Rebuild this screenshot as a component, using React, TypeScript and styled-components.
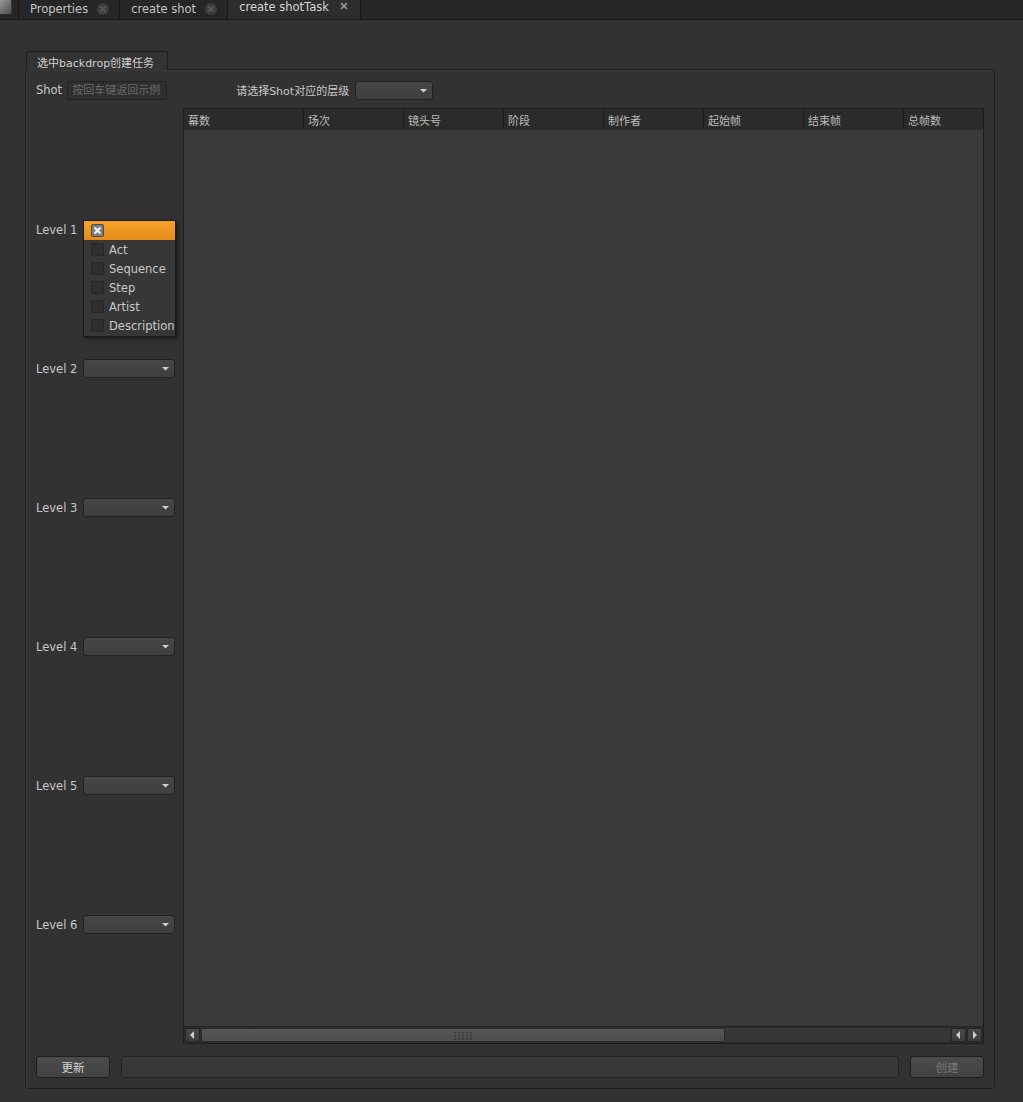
import React from 'react';
import styled, { createGlobalStyle } from 'styled-components';

const GlobalStyle = createGlobalStyle`
  html, body {
    margin: 0;
    padding: 0;
    background: #323232;
  }
  body {
    font-family: "DejaVu Sans", "Noto Sans CJK SC", sans-serif;
    font-size: 11px;
    color: #c8c8c8;
  }
  * {
    box-sizing: border-box;
  }
`;

const columns = ['幕数', '场次', '镜头号', '阶段', '制作者', '起始帧', '结束帧', '总帧数'];
const levelOptions = ['Act', 'Sequence', 'Step', 'Artist', 'Description'];

const CloseIcon = ({ active }: { active?: boolean }) => (
  <svg width="12" height="12" viewBox="0 0 12 12">
    {!active && <circle cx="6" cy="6" r="6" fill="#3e3e3e" />}
    <path
      d="M3.6 3.6 L8.4 8.4 M8.4 3.6 L3.6 8.4"
      stroke={active ? '#8c8c8c' : '#555'}
      strokeWidth="2"
      strokeLinecap="round"
    />
  </svg>
);

const CheckedBox = () => (
  <svg width="13" height="13" viewBox="0 0 13 13">
    <rect x="0.5" y="0.5" width="12" height="12" rx="1" fill="#7c7c7c" stroke="#4a4a4a" />
    <path d="M3.5 3.5 L9.5 9.5 M9.5 3.5 L3.5 9.5" stroke="#f2f2f2" strokeWidth="2.4" />
  </svg>
);

const Grip = () => (
  <svg width="20" height="9" viewBox="0 0 20 9">
    {[0, 1, 2].map((r) =>
      [0, 1, 2, 3, 4].map((c) => (
        <rect key={`${r}-${c}`} x={c * 4 + 1} y={r * 3 + 1} width="2" height="1.5" fill="#3a3a3a" />
      ))
    )}
  </svg>
);

const Arrow = ({ dir }: { dir: 'left' | 'right' | 'down' }) => {
  if (dir === 'down') {
    return (
      <svg width="9" height="7" viewBox="0 0 9 7">
        <path d="M1 2 L8 2 L4.5 5.5 Z" fill="#d0d0d0" />
      </svg>
    );
  }
  const d = dir === 'left' ? 'M6 1 L6 9 L2 5 Z' : 'M3 1 L3 9 L7 5 Z';
  return (
    <svg width="9" height="10" viewBox="0 0 9 10">
      <path d={d} fill="#d0d0d0" />
    </svg>
  );
};

const ComboBox = ({ width }: { width?: number }) => (
  <Combo $width={width}>
    <Arrow dir="down" />
  </Combo>
);

const App = () => {
  return (
    <Window>
      <GlobalStyle />
      <TabBar>
        <PaneIcon />
        <Tab>
          <span>Properties</span>
          <CloseIcon />
        </Tab>
        <Tab>
          <span>create shot</span>
          <CloseIcon />
        </Tab>
        <Tab $active>
          <span>create shotTask</span>
          <CloseIcon active />
        </Tab>
      </TabBar>

      <Body>
        <GroupBox>
          <GroupTitle>选中backdrop创建任务</GroupTitle>
          <GroupFrame>
            <TopRow>
              <Label>Shot</Label>
              <LineEdit placeholder="按回车键返回示例" />
              <ChoiceLabel>请选择Shot对应的层级</ChoiceLabel>
              <ComboBox width={78} />
            </TopRow>

            <MainRow>
              <LevelColumn>
                {[1, 2, 3, 4, 5, 6].map((n) => (
                  <LevelRow key={n}>
                    <LevelLabel>Level {n}</LevelLabel>
                    <ComboBox />
                    {n === 1 && (
                      <Popup>
                        <PopupItem $selected>
                          <CheckedBox />
                        </PopupItem>
                        {levelOptions.map((opt) => (
                          <PopupItem key={opt}>
                            <CheckBox />
                            <span>{opt}</span>
                          </PopupItem>
                        ))}
                      </Popup>
                    )}
                  </LevelRow>
                ))}
              </LevelColumn>

              <Table>
                <HeaderRow>
                  {columns.map((c, i) => (
                    <HeaderCell key={c} $width={i === 0 ? 120 : 100}>
                      {c}
                    </HeaderCell>
                  ))}
                </HeaderRow>
                <TableBody />
                <HScroll>
                  <ScrollButton>
                    <Arrow dir="left" />
                  </ScrollButton>
                  <ScrollTrack>
                    <ScrollThumb>
                      <Grip />
                    </ScrollThumb>
                  </ScrollTrack>
                  <ScrollButton>
                    <Arrow dir="left" />
                  </ScrollButton>
                  <ScrollButton>
                    <Arrow dir="right" />
                  </ScrollButton>
                </HScroll>
              </Table>
            </MainRow>

            <BottomRow>
              <Button>更新</Button>
              <Progress />
              <Button $disabled>创建</Button>
            </BottomRow>
          </GroupFrame>
        </GroupBox>
      </Body>
    </Window>
  );
};

const Window = styled.div`
  width: 1023px;
  height: 1102px;
  display: flex;
  flex-direction: column;
  overflow: hidden;
  background: #323232;
`;

const TabBar = styled.div`
  height: 20px;
  display: flex;
  align-items: stretch;
  background: #262626;
  border-bottom: 1px solid #1b1b1b;
`;

const PaneIcon = styled.div`
  width: 12px;
  height: 14px;
  margin-right: 6px;
  background: linear-gradient(135deg, #9a9a9a 0%, #6a6a6a 60%, #505050 100%);
  border-right: 1px solid #3a3a3a;
`;

const Tab = styled.div<{ $active?: boolean }>`
  display: flex;
  align-items: center;
  gap: 9px;
  padding: 0 10px 1px 11px;
  height: 19px;
  color: ${(p) => (p.$active ? '#d6d6d6' : '#c4c4c4')};
  background: ${(p) => (p.$active ? '#2d2d2d' : '#262626')};
  border-left: 1px solid #161616;
  font-size: 11.5px;

  &:last-child {
    border-right: 1px solid #161616;
    align-items: flex-start;
    padding-top: 0;
  }
`;

const Body = styled.div`
  flex: 1;
  display: flex;
  flex-direction: column;
  padding: 31px 28px 13px 25px;
`;

const GroupBox = styled.div`
  flex: 1;
  display: flex;
  flex-direction: column;
`;

const GroupTitle = styled.div`
  align-self: flex-start;
  margin-left: 1px;
  height: 19px;
  width: 142px;
  padding: 2px 0 0 10px;
  border: 1px solid #1f1f1f;
  border-bottom: none;
  border-radius: 3px 3px 0 0;
  background: #333333;
  color: #d0d0d0;
  margin-bottom: -1px;
  position: relative;
  z-index: 1;
`;

const GroupFrame = styled.div`
  flex: 1;
  display: flex;
  flex-direction: column;
  padding: 10px;
  border: 1px solid #1f1f1f;
  border-radius: 3px;
  box-shadow: inset 1px 1px 0 #3a3a3a;
`;

const TopRow = styled.div`
  height: 20px;
  display: flex;
  align-items: center;
`;

const Label = styled.span`
  color: #c8c8c8;
  margin-right: 5px;
  white-space: nowrap;
  font-size: 11.5px;
`;

const ChoiceLabel = styled.span`
  color: #c8c8c8;
  margin: 0 6px 0 69px;
  white-space: nowrap;
  font-size: 11px;
`;

const LineEdit = styled.input`
  width: 100px;
  height: 19px;
  padding: 0 4px;
  border: 1px solid #222;
  border-radius: 2px;
  background: #2f2f2f;
  color: #c8c8c8;
  font: inherit;
  font-size: 11px;
  outline: none;

  &::placeholder {
    color: #6a6a6a;
  }
`;

const Combo = styled.div<{ $width?: number }>`
  width: ${(p) => (p.$width ? `${p.$width}px` : 'auto')};
  flex: ${(p) => (p.$width ? 'none' : '1')};
  height: 19px;
  display: flex;
  align-items: center;
  justify-content: flex-end;
  padding-right: 4px;
  border: 1px solid #222;
  border-radius: 3px;
  background: linear-gradient(#474747, #3e3e3e);
`;

const MainRow = styled.div`
  flex: 1;
  display: flex;
  gap: 8px;
  margin-top: 8px;
  min-height: 0;
`;

const LevelColumn = styled.div`
  width: 139px;
  display: flex;
  flex-direction: column;
  gap: 120px;
  padding-top: 112px;
`;

const LevelRow = styled.div`
  position: relative;
  height: 19px;
  display: flex;
  align-items: center;
`;

const LevelLabel = styled.span`
  width: 47px;
  color: #c8c8c8;
  white-space: nowrap;
  font-size: 11.5px;
`;

const Popup = styled.div`
  position: absolute;
  left: 47px;
  top: 0;
  width: 93px;
  height: 117px;
  background: #373737;
  border: 1px solid #1a1a1a;
  box-shadow: 2px 2px 3px rgba(0, 0, 0, 0.45);
  z-index: 5;
`;

const PopupItem = styled.div<{ $selected?: boolean }>`
  height: 19px;
  display: flex;
  align-items: center;
  gap: 5px;
  padding-left: 7px;
  color: #c8c8c8;
  font-size: 11.5px;
  background: ${(p) => (p.$selected ? 'linear-gradient(#f8a22c, #e68b18)' : 'transparent')};
  white-space: nowrap;
`;

const CheckBox = styled.span`
  width: 13px;
  height: 13px;
  flex-shrink: 0;
  border: 1px solid #262626;
  border-radius: 1px;
  background: #2f2f2f;
`;

const Table = styled.div`
  flex: 1;
  display: flex;
  flex-direction: column;
  border: 1px solid #1d1d1d;
  background: #3a3a3a;
  overflow: hidden;
`;

const HeaderRow = styled.div`
  height: 21px;
  display: flex;
  flex-shrink: 0;
  background: #2b2b2b;
  overflow: hidden;
`;

const HeaderCell = styled.div<{ $width: number }>`
  width: ${(p) => p.$width}px;
  flex-shrink: 0;
  padding: 3px 0 0 4px;
  border-right: 1px solid #1e1e1e;
  color: #bcbcbc;
  font-size: 11px;
`;

const TableBody = styled.div`
  flex: 1;
  background: #3a3a3a;
`;

const HScroll = styled.div`
  height: 17px;
  display: flex;
  gap: 1px;
  padding: 1px;
  background: #2c2c2c;
  border-top: 1px solid #232323;
`;

const ScrollButton = styled.div`
  width: 15px;
  display: flex;
  align-items: center;
  justify-content: center;
  background: linear-gradient(#474747, #3c3c3c);
  border: 1px solid #262626;
  border-radius: 2px;
`;

const ScrollTrack = styled.div`
  flex: 1;
  display: flex;
  background: repeating-conic-gradient(#323232 0 25%, #3b3b3b 0 50%) 0 0 / 2px 2px;
`;

const ScrollThumb = styled.div`
  width: 524px;
  display: flex;
  align-items: center;
  justify-content: center;
  background: linear-gradient(#575757, #4d4d4d);
  border: 1px solid #2a2a2a;
  border-radius: 2px;
`;

const BottomRow = styled.div`
  height: 22px;
  margin-top: 12px;
  display: flex;
  gap: 11px;
`;

const Button = styled.div<{ $disabled?: boolean }>`
  width: 74px;
  display: flex;
  align-items: center;
  justify-content: center;
  border: 1px solid #1e1e1e;
  border-radius: 3px;
  background: linear-gradient(#4c4c4c, #414141);
  color: ${(p) => (p.$disabled ? '#767676' : '#d2d2d2')};
  font-size: 11.5px;
`;

const Progress = styled.div`
  flex: 1;
  border: 1px solid #232323;
  border-radius: 3px;
  background: #383838;
`;

export default App;
